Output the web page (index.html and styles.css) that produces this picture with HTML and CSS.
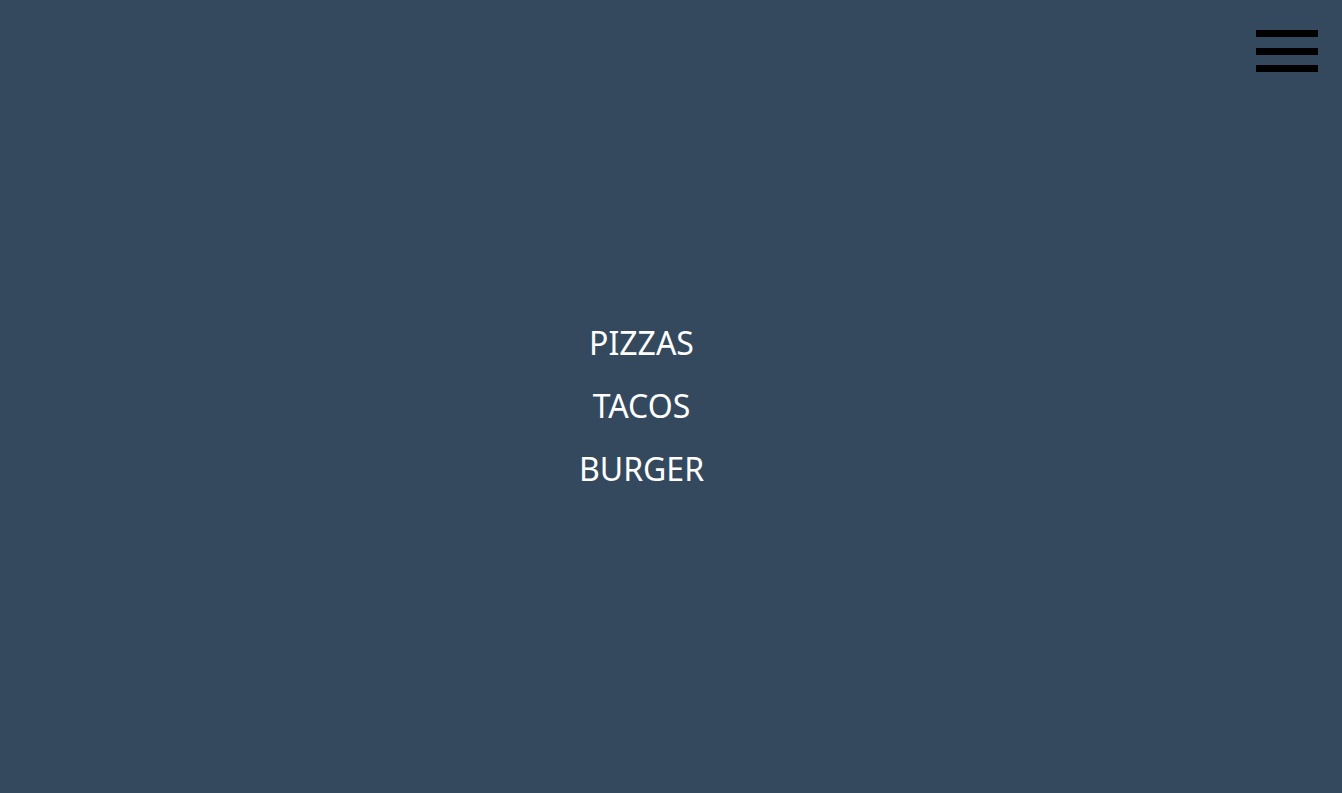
FILE: index.html
```html
<!DOCTYPE html>
<html>
<head>
<meta charset="utf-8">
<link rel="stylesheet" href="styles.css">
</head>
<body>
<div class="page">
  <button class="burger" aria-label="menu">
    <span class="bar"></span>
    <span class="bar"></span>
    <span class="bar"></span>
  </button>
  <nav class="menu">
    <a class="item" href="#">PIZZAS</a>
    <a class="item" href="#">TACOS</a>
    <a class="item" href="#">BURGER</a>
  </nav>
</div>
</body>
</html>
```
FILE: styles.css
```css
html, body {
  margin: 0;
  padding: 0;
  height: 100%;
}
body {
  background: #34495e;
  font-family: "Noto Sans", "Open Sans", sans-serif;
}
.page {
  height: 100%;
  display: flex;
  align-items: center;
  justify-content: center;
  padding-top: 17px;
  padding-right: 59px;
  box-sizing: border-box;
}
.burger {
  position: absolute;
  top: 30px;
  right: 24px;
  width: 62px;
  padding: 0;
  border: 0;
  background: none;
  display: flex;
  flex-direction: column;
  gap: 10.5px;
}
.bar {
  display: block;
  height: 7px;
  background: #000;
}
.menu {
  display: flex;
  flex-direction: column;
  align-items: center;
}
.item {
  color: #fff;
  text-decoration: none;
  font-size: 32px;
  line-height: 63px;
}
```
